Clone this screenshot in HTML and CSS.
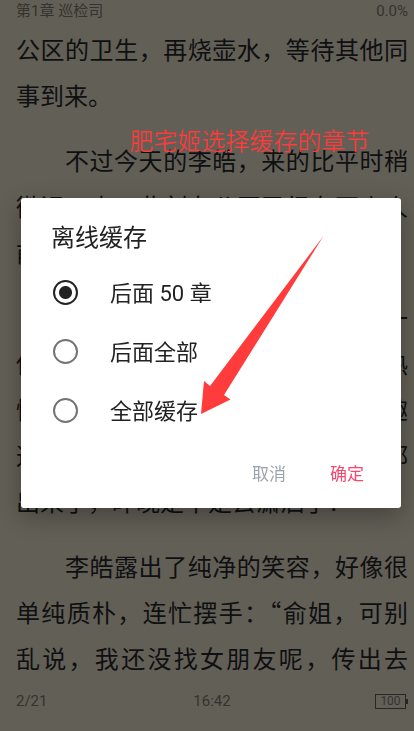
FILE: index.html
```html
<!DOCTYPE html>
<html lang="zh-CN">
<head>
    <meta charset="UTF-8">
    <meta name="viewport" content="width=device-width, initial-scale=1.0">
    <title>第1章 巡检司</title>
    <link rel="stylesheet" href="styles.css">
</head>
<body>
    <div class="reader">
        <header class="reader-header">
            <span>第1章 巡检司</span>
            <span>0.0%</span>
        </header>

        <main class="reader-text">
            <p class="continued">公区的卫生，再烧壶水，等待其他同<br><span class="last-line">事到来。</span></p>
            <p>不过今天的李皓，来的比平时稍<br>微迟一点，此刻办公区已经有不少人<br><span class="last-line">前来了。</span></p>
            <p>李皓刚进门，就有人笑着喊了一<br>他一声，几位同事都显得格外的热<br>情，俞姐更是满脸好奇，很感兴趣<br>这事：“李皓，你今天黑眼圈全都<br><span class="last-line">出来了，昨晚是不是去潇洒了？”</span></p>
            <p>李皓露出了纯净的笑容，好像很<br>单纯质朴，连忙摆手：“俞姐，可别<br>乱说，我还没找女朋友呢，传出去</p>
        </main>

        <footer class="reader-footer">
            <span>2/21</span>
            <span>16:42</span>
            <span class="battery">100</span>
        </footer>
    </div>

    <!-- Offline cache dialog -->
    <div class="overlay">
        <form class="dialog" role="dialog" aria-labelledby="dialogTitle">
            <h2 id="dialogTitle">离线缓存</h2>
            <label class="option">
                <input type="radio" name="cache" value="next50" checked>
                <span>后面 50 章</span>
            </label>
            <label class="option">
                <input type="radio" name="cache" value="rest">
                <span>后面全部</span>
            </label>
            <label class="option">
                <input type="radio" name="cache" value="all">
                <span>全部缓存</span>
            </label>
            <div class="actions">
                <button type="button" class="cancel">取消</button>
                <button type="button" class="confirm">确定</button>
            </div>
            <svg class="arrow" width="124" height="180" viewBox="0 0 124 180" aria-hidden="true">
                <path d="M122.500 0 L9 150 L3 145 L0 178 L29.500 163.500 L23 159 Z" fill="#ff3b3b"/>
            </svg>
        </form>
    </div>
    <div class="note">肥宅姬选择缓存的章节</div>
</body>
</html>
```

FILE: styles.css
```css
* {
    box-sizing: border-box;
}
body {
    margin: 0;
    font-family: Roboto, "Noto Sans CJK SC", sans-serif;
    background: #625f56;
    color: #0f1012;
}
.reader {
    display: flex;
    flex-direction: column;
    height: 100vh;
    padding: 1px 6px 0 16px;
    overflow: hidden;
}
.reader-header,
.reader-footer {
    display: flex;
    justify-content: space-between;
    align-items: center;
    height: 20px;
    font-size: 15px;
    line-height: 20px;
    color: #34332f;
}
.reader-text {
    flex: 1;
    min-height: 0;
    padding-top: 5px;
    font-family: "Noto Sans CJK SC", sans-serif;
    font-size: 24px;
    line-height: 46px;
}
.reader-text p {
    margin: 0 0 19px;
    text-indent: 49px;
    text-align: justify;
    text-align-last: justify;
    white-space: nowrap;
}
.reader-text .continued {
    text-indent: 0;
}
.last-line {
    display: inline-block;
    text-indent: 0;
    text-align-last: left;
}
.reader-footer {
    display: grid;
    grid-template-columns: 1fr auto 1fr;
    margin-bottom: 20px;
}
.battery {
    position: relative;
    justify-self: end;
    width: 31px;
    height: 15px;
    margin-right: 2px;
    border: 1px solid #272725;
    font-size: 12px;
    line-height: 13px;
    text-align: center;
}
.battery::after {
    content: "";
    position: absolute;
    top: 4px;
    right: -3px;
    width: 2px;
    height: 5px;
    background: #272725;
}
.overlay {
    position: fixed;
    inset: 0;
    display: flex;
    align-items: center;
    padding: 0 13px 25px 21px;
}
.dialog {
    position: relative;
    flex: 1;
    padding: 20px 29px 18px 30px;
    border-radius: 3px;
    background: #fff;
    box-shadow: 0 8px 24px rgba(0, 0, 0, 0.3);
    color: #222;
}
.dialog h2 {
    margin: 0 0 5px;
    font-size: 24px;
    font-weight: normal;
    line-height: 40px;
}
.option {
    display: flex;
    align-items: center;
    gap: 32px;
    height: 59px;
    font-size: 22px;
}
.option span {
    padding-bottom: 4px;
}
.option input {
    appearance: none;
    width: 25px;
    height: 25px;
    margin: 0 0 0 2px;
    border: 2px solid #737373;
    border-radius: 50%;
}
.option input:checked {
    border-color: #222;
    background: radial-gradient(circle, #222 6px, transparent 7px);
}
.actions {
    display: flex;
    justify-content: flex-end;
    gap: 28px;
    padding-top: 14px;
}
.actions button {
    height: 36px;
    padding: 0 8px;
    border: none;
    background: none;
    font-family: inherit;
    font-size: 17px;
    cursor: pointer;
}
.actions .cancel {
    color: #9aa3ad;
}
.actions .confirm {
    color: #f5476f;
}
.arrow {
    position: absolute;
    top: 38px;
    left: 180px;
    pointer-events: none;
}
.note {
    position: absolute;
    top: 122px;
    left: 130px;
    font-family: "Noto Sans CJK SC", sans-serif;
    font-size: 24px;
    font-weight: 350;
    line-height: 36px;
    color: #ff3b3b;
}
```
